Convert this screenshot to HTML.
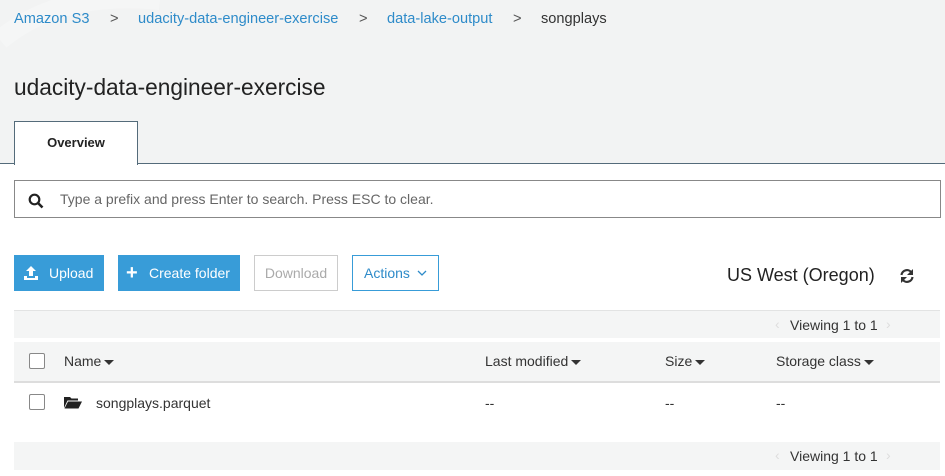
<!DOCTYPE html>
<html><head><style>
*{margin:0;padding:0;box-sizing:border-box}
body{width:945px;height:476px;overflow:hidden;background:#fff;font-family:"Liberation Sans",Arial,sans-serif;font-size:14px;color:#333;position:relative}
.top{position:absolute;left:0;top:0;width:945px;height:164px;background:#f2f3f3;border-bottom:1px solid #546b7a}
.a{position:absolute;white-space:nowrap}
.link{color:#2e8bc9;font-size:14.6px}
.tab{position:absolute;left:14px;top:121px;width:124px;height:44px;background:#fff;border:1px solid #546b7a;border-bottom:none;font-weight:bold;font-size:13px;text-align:center;line-height:42px;color:#222}
.search{position:absolute;left:14px;top:180px;width:927px;height:38px;border:1px solid #888;background:#fff}
.btn{position:absolute;top:255px;height:36px;line-height:36px;font-size:14px;color:#fff;background:#389cd8;padding:0}
.band{position:absolute;left:14px;width:926px;background:#f4f5f5}
.cb{position:absolute;width:16px;height:16px;border:1px solid #888;border-radius:2px;background:#fff}
.tri{display:inline-block;width:0;height:0;border-left:5px solid transparent;border-right:5px solid transparent;border-top:5px solid #333;vertical-align:middle;margin-left:3px}
</style></head><body>
<div class="top"></div>
<svg class="a" style="left:0;top:0" width="160" height="120"><path d="M0 40 Q60 -10 160 0" stroke="#fff" stroke-width="20" fill="none" opacity=".25"/></svg>
<div class="a link" style="left:14px;top:11px">Amazon S3</div>
<div class="a" style="left:110px;top:11px;font-size:14.6px;color:#555">&gt;</div>
<div class="a link" style="left:138px;top:11px">udacity-data-engineer-exercise</div>
<div class="a" style="left:359px;top:11px;font-size:14.6px;color:#555">&gt;</div>
<div class="a link" style="left:387px;top:11px">data-lake-output</div>
<div class="a" style="left:513px;top:11px;font-size:14.6px;color:#555">&gt;</div>
<div class="a" style="left:541px;top:11px;font-size:14.6px;color:#333">songplays</div>
<div class="a" style="left:14px;top:74px;font-size:22.7px;color:#222">udacity-data-engineer-exercise</div>
<div class="tab">Overview</div>
<div class="search">
<svg class="a" style="left:13px;top:12px" width="16" height="16"><circle cx="6.5" cy="6.5" r="4.8" stroke="#222" stroke-width="2.2" fill="none"/><line x1="10" y1="10" x2="14.5" y2="14.5" stroke="#222" stroke-width="2.6"/></svg>
<div class="a" style="left:45px;top:10px;color:#666;font-size:14px">Type a prefix and press Enter to search. Press ESC to clear.</div>
</div>
<div class="btn" style="left:14px;width:90px"><svg class="a" style="left:9px;top:10px" width="16" height="16"><path d="M8 1 L3 6 H6 V11 H10 V6 H13 Z" fill="#fff"/><path d="M1 11 V15 H15 V11 H12 V13 H4 V11 Z" fill="#fff"/></svg><span class="a" style="left:35px">Upload</span></div>
<div class="btn" style="left:118px;width:122px"><span class="a" style="left:8px;font-size:20px;font-weight:bold">+</span><span class="a" style="left:31px">Create folder</span></div>
<div class="btn" style="left:254px;width:84px;background:#fff;border:1px solid #ccc;color:#aaa;line-height:34px;text-align:center">Download</div>
<div class="btn" style="left:352px;width:87px;background:#fff;border:1px solid #389cd8;color:#2e8bc9;line-height:34px"><span class="a" style="left:11px">Actions</span><svg class="a" style="left:64px;top:13px" width="10" height="8"><path d="M1 2 L5 6 L9 2" stroke="#2e8bc9" stroke-width="1.3" fill="none"/></svg></div>
<div class="a" style="left:727px;top:265px;font-size:18px;color:#222">US West (Oregon)</div>
<svg class="a" style="left:899px;top:268px" width="16" height="16"><path d="M2.5 7 A5.5 5.5 0 0 1 12.5 4.5" stroke="#333" stroke-width="2.2" fill="none"/><path d="M14 1 V7 H8 Z" fill="#333"/><path d="M13.5 9 A5.5 5.5 0 0 1 3.5 11.5" stroke="#333" stroke-width="2.2" fill="none"/><path d="M2 15 V9 H8 Z" fill="#333"/></svg>
<div class="band" style="top:310px;height:28px;border-top:1px solid #e2e3e3"></div>
<div class="a" style="left:775px;top:316px;color:#ddd">&#8249;</div>
<div class="a" style="left:790px;top:317px;color:#333">Viewing 1 to 1</div>
<div class="a" style="left:886px;top:316px;color:#ddd">&#8250;</div>
<div class="band" style="top:342px;border-bottom:2px solid #ddd;height:41px"></div>
<div class="cb" style="left:29px;top:353px"></div>
<div class="a" style="left:64px;top:353px">Name<span class="tri"></span></div>
<div class="a" style="left:485px;top:353px">Last modified<span class="tri"></span></div>
<div class="a" style="left:665px;top:353px">Size<span class="tri"></span></div>
<div class="a" style="left:776px;top:353px">Storage class<span class="tri"></span></div>
<div class="cb" style="left:29px;top:394px"></div>
<svg class="a" style="left:64px;top:396px" width="18" height="13"><path d="M0 1 H6 L7.5 2.5 H14 V4.5 H3.5 L0 12 Z" fill="#222"/><path d="M4 5.5 H18 L14.5 12.5 H0.5 Z" fill="#222"/></svg>
<div class="a" style="left:96px;top:395px">songplays.parquet</div>
<div class="a" style="left:485px;top:395px">--</div>
<div class="a" style="left:665px;top:395px">--</div>
<div class="a" style="left:776px;top:395px">--</div>
<div class="band" style="top:442px;height:28px"></div>
<div class="a" style="left:775px;top:447px;color:#ddd">&#8249;</div>
<div class="a" style="left:790px;top:448px;color:#333">Viewing 1 to 1</div>
<div class="a" style="left:886px;top:447px;color:#ddd">&#8250;</div>
</body></html>
